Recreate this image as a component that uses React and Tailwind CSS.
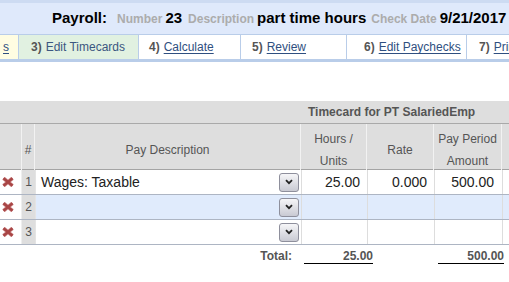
import React from 'react';

const tabs = [
    { num: '', label: 's', w: 'w-[19px]', pl: 'pl-[3px]', bg: 'bg-[#fffde2]' },
    { num: '3)', label: 'Edit Timecards', w: 'w-[120px]', pl: 'pl-[12px]', bg: 'bg-[#e1f1e1]', current: true },
    { num: '4)', label: 'Calculate', w: 'w-[102px]', pl: 'pl-[10px]', bg: 'bg-white' },
    { num: '5)', label: 'Review', w: 'w-[106px]', pl: 'pl-[11px]', bg: 'bg-white' },
    { num: '6)', label: 'Edit Paychecks', w: 'w-[120px]', pl: 'pl-[17px]', bg: 'bg-white' },
    { num: '7)', label: 'Print', w: 'w-[100px]', pl: 'pl-[12px]', bg: 'bg-white' },
];

const rows = [
    { n: 1, desc: 'Wages: Taxable', hours: '25.00', rate: '0.000', amount: '500.00', bg: 'bg-white' },
    { n: 2, desc: '', hours: '', rate: '', amount: '', bg: 'bg-[#e0ebfc]' },
    { n: 3, desc: '', hours: '', rate: '', amount: '', bg: 'bg-white' },
];

const cols = 'grid grid-cols-[22px_13px_266px_66px_67px_68px_1fr]';

const DeleteIcon = () => (
    <svg width="12" height="10" viewBox="0 0 12 10">
        <path d="M1.5 1.2 L10.5 8.8 M10.5 1.2 L1.5 8.8" stroke="#d69a9a" strokeWidth="3.8" strokeLinecap="butt" />
        <path d="M1.5 1.2 L10.5 8.8 M10.5 1.2 L1.5 8.8" stroke="#a84545" strokeWidth="2.6" strokeLinecap="butt" />
    </svg>
);

const SelectButton = () => (
    <div className="w-[20px] h-[19px] rounded-[3px] border border-[#8e8f9c] bg-gradient-to-b from-[#f6f6f8] to-[#c9cad3] flex items-center justify-center">
        <svg width="8" height="6" viewBox="0 0 8 6">
            <path d="M1 1.2 L4 4.2 L7 1.2" stroke="#222" strokeWidth="1.8" fill="none" />
        </svg>
    </div>
);

const App = () => {
    return (
        <div className="w-[509px] h-[282px] overflow-hidden bg-white font-['Liberation_Sans',Arial,sans-serif]">
            {/* Payroll header */}
            <div className="h-[34px] bg-[#dfe9fb] border-t-[3px] border-[#cddbf2] flex items-center pl-[52px] whitespace-nowrap">
                <div className="flex items-baseline">
                    <span className="text-[15px] font-bold text-black">Payroll:</span>
                    <span className="ml-[10px] text-[12px] font-bold text-[#acacac]">Number</span>
                    <span className="ml-[3px] text-[15px] font-bold text-black">23</span>
                    <span className="ml-[6px] text-[12px] font-bold text-[#acacac]">Description</span>
                    <span className="ml-[3px] text-[15px] font-bold text-black">part time hours</span>
                    <span className="ml-[5px] text-[12px] font-bold text-[#acacac]">Check Date</span>
                    <span className="ml-[3px] text-[15px] font-bold text-black">9/21/2017</span>
                </div>
            </div>

            {/* Step tabs */}
            <div className="flex h-[28px] border-t border-b-[3px] border-[#b9cde9] whitespace-nowrap text-[12px]">
                {tabs.map((t, i) => (
                    <div key={i} className={`${t.w} ${t.pl} ${t.bg} shrink-0 flex items-center border-r border-[#b9cde9]`}>
                        {t.num && <span className="font-bold text-[#555] mr-[4px]">{t.num}</span>}
                        <span className={t.current ? 'text-[#3b5680]' : 'text-[#2f4f80] underline underline-offset-2'}>{t.label}</span>
                    </div>
                ))}
            </div>

            {/* Timecard table */}
            <div className="mt-[39px] w-[509px]">
                <div className="h-[23px] bg-[#dedede] border-b border-[#a9a9a9] flex items-center pl-[308px] text-[12px] font-bold text-[#555] whitespace-nowrap">
                    Timecard for PT SalariedEmp
                </div>

                <div className={`${cols} h-[46px] bg-[#dedede] border-b border-[#a4a4a4] text-[12px] text-[#555] leading-[22px]`}>
                    <div className="border-r border-[#f2f2f2]"></div>
                    <div className="border-r border-[#f2f2f2] pt-[4px] flex items-center justify-center">#</div>
                    <div className="border-r border-[#f2f2f2] pt-[4px] flex items-center justify-center">Pay Description</div>
                    <div className="border-r border-[#f2f2f2] pt-[4px] flex flex-col items-center justify-center">
                        <span>Hours /</span>
                        <span>Units</span>
                    </div>
                    <div className="border-r border-[#f2f2f2] pt-[4px] flex items-center justify-center">Rate</div>
                    <div className="border-r border-[#f2f2f2] pt-[4px] flex flex-col items-center justify-center">
                        <span>Pay Period</span>
                        <span>Amount</span>
                    </div>
                    <div></div>
                </div>

                {rows.map((r) => (
                    <div key={r.n} className={`${cols} h-[25px] border-b border-[#adb5c3] text-[14px] text-[#222]`}>
                        <div className="bg-white border-r border-[#eeeeee] flex items-center pl-[2px]">
                            <DeleteIcon />
                        </div>
                        <div className="bg-[#dedede] text-[12px] text-[#555] flex items-center justify-center">{r.n}</div>
                        <div className={`${r.bg} border-l border-[#e4e4e4] flex items-center justify-between pl-[5px] pr-[2px]`}>
                            <span>{r.desc}</span>
                            <SelectButton />
                        </div>
                        <div className={`${r.bg} border-l border-[#dddddd] flex items-center justify-end pr-[7px]`}>{r.hours}</div>
                        <div className={`${r.bg} border-l border-[#dddddd] flex items-center justify-end pr-[7px]`}>{r.rate}</div>
                        <div className={`${r.bg} border-l border-[#dddddd] flex items-center justify-end pr-[8px]`}>{r.amount}</div>
                        <div className={`${r.bg} border-l border-[#dddddd]`}></div>
                    </div>
                ))}

                {/* Totals */}
                <div className="flex items-end h-[19px] text-[12px] leading-[14px] font-bold text-[#555] whitespace-nowrap">
                    <div className="w-[301px] text-right pr-[9px] pb-[1px]">Total:</div>
                    <div className="ml-[3px] w-[69px] text-right border-b border-black">25.00</div>
                    <div className="ml-[65px] w-[66px] text-right border-b border-black">500.00</div>
                </div>
            </div>
        </div>
    );
};

export default App;
